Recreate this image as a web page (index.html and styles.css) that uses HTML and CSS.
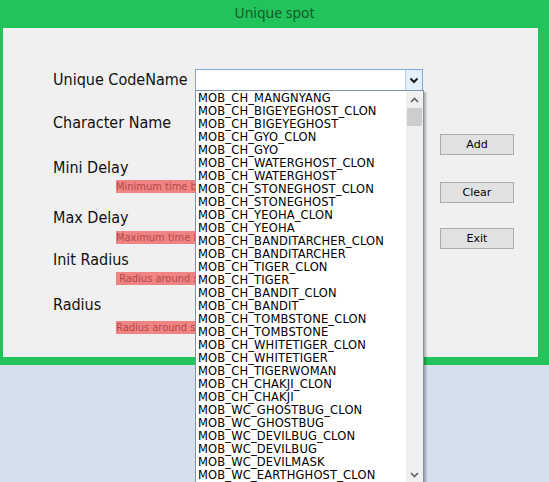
FILE: index.html
```html
<!DOCTYPE html>
<html>
<head>
<meta charset="utf-8">
<link rel="stylesheet" href="styles.css">
</head>
<body>
<div class="window">
  <div class="titlebar">Unique spot</div>
  <div class="client">
    <div class="form">
      <div class="row row-code">
        <span class="label label-code">Unique CodeName</span>
        <div class="combo">
          <div class="combo-field"></div>
          <div class="combo-btn">
            <svg width="10" height="7" viewBox="0 0 10 7"><polyline points="1.5,1.5 5,5 8.5,1.5" fill="none" stroke="#1a1a1a" stroke-width="2"/></svg>
          </div>
          <div class="droplist">
            <ul class="items">
              <li>MOB_CH_MANGNYANG</li>
              <li>MOB_CH_BIGEYEGHOST_CLON</li>
              <li>MOB_CH_BIGEYEGHOST</li>
              <li>MOB_CH_GYO_CLON</li>
              <li>MOB_CH_GYO</li>
              <li>MOB_CH_WATERGHOST_CLON</li>
              <li>MOB_CH_WATERGHOST</li>
              <li>MOB_CH_STONEGHOST_CLON</li>
              <li>MOB_CH_STONEGHOST</li>
              <li>MOB_CH_YEOHA_CLON</li>
              <li>MOB_CH_YEOHA</li>
              <li>MOB_CH_BANDITARCHER_CLON</li>
              <li>MOB_CH_BANDITARCHER</li>
              <li>MOB_CH_TIGER_CLON</li>
              <li>MOB_CH_TIGER</li>
              <li>MOB_CH_BANDIT_CLON</li>
              <li>MOB_CH_BANDIT</li>
              <li>MOB_CH_TOMBSTONE_CLON</li>
              <li>MOB_CH_TOMBSTONE</li>
              <li>MOB_CH_WHITETIGER_CLON</li>
              <li>MOB_CH_WHITETIGER</li>
              <li>MOB_CH_TIGERWOMAN</li>
              <li>MOB_CH_CHAKJI_CLON</li>
              <li>MOB_CH_CHAKJI</li>
              <li>MOB_WC_GHOSTBUG_CLON</li>
              <li>MOB_WC_GHOSTBUG</li>
              <li>MOB_WC_DEVILBUG_CLON</li>
              <li>MOB_WC_DEVILBUG</li>
              <li>MOB_WC_DEVILMASK</li>
              <li>MOB_WC_EARTHGHOST_CLON</li>
            </ul>
            <div class="scrollbar">
              <div class="sb-btn">
                <svg width="9" height="6" viewBox="0 0 9 6"><polyline points="1,5 4.5,1.5 8,5" fill="none" stroke="#606060" stroke-width="1.6"/></svg>
              </div>
              <div class="sb-thumb"></div>
              <div class="sb-track"></div>
              <div class="sb-btn">
                <svg width="9" height="6" viewBox="0 0 9 6"><polyline points="1,1 4.5,4.5 8,1" fill="none" stroke="#606060" stroke-width="1.6"/></svg>
              </div>
            </div>
          </div>
        </div>
      </div>
      <div class="label label-char">Character Name</div>
      <div class="label label-mini">Mini Delay</div>
      <div class="hint hint-mini">Minimum time be</div>
      <div class="label label-max">Max Delay</div>
      <div class="hint hint-max">Maximum time be</div>
      <div class="label label-init">Init Radius</div>
      <div class="hint hint-init">&nbsp;Radius around s</div>
      <div class="label label-rad">Radius</div>
      <div class="hint hint-rad">Radius around s</div>
    </div>
    <div class="buttons">
      <button class="btn btn-add">Add</button>
      <button class="btn btn-clear">Clear</button>
      <button class="btn btn-exit">Exit</button>
    </div>
  </div>
</div>
</body>
</html>
```
FILE: styles.css
```css
html, body {
  margin: 0;
  padding: 0;
}
body {
  background: #d6e0ed;
  width: 549px;
  height: 482px;
  overflow: hidden;
  font-family: "DejaVu Sans", sans-serif;
}
.window {
  background: #22c35a;
  height: 365px;
  display: flex;
  flex-direction: column;
}
.titlebar {
  height: 28px;
  line-height: 26px;
  text-align: center;
  font-family: "Noto Sans", "Open Sans", sans-serif;
  font-size: 14px;
  color: #17592b;
}
.client {
  margin: 0 11px 0 3px;
  height: 329px;
  background: #f0f0f0;
  display: grid;
  grid-template-columns: 437px auto;
}
.form {
  padding: 41px 0 0 50px;
  display: flex;
  flex-direction: column;
  align-items: flex-start;
}
.row-code {
  display: flex;
  align-items: center;
  height: 22px;
}
.label {
  font-family: "DejaVu Sans Condensed", "DejaVu Sans", sans-serif;
  font-stretch: condensed;
  font-size: 16px;
  line-height: 20px;
  height: 20px;
  color: #111;
  white-space: nowrap;
}
.label-code {
  width: 142px;
  line-height: 22px;
  height: 22px;
}
.label-char { margin-top: 22px; }
.label-mini { margin-top: 25px; }
.label-max { margin-top: 15px; }
.label-init { margin-top: 6px; }
.label-rad { margin-top: 10px; }
.hint {
  margin-left: 63px;
  width: 79px;
  height: 13px;
  line-height: 13px;
  font-family: "DejaVu Sans Condensed", "DejaVu Sans", sans-serif;
  font-stretch: condensed;
  font-size: 11px;
  background: #f28383;
  color: #b04a4a;
  white-space: nowrap;
  overflow: hidden;
}
.hint-mini { margin-top: 2px; }
.hint-max { margin-top: 3px; }
.hint-init { margin-top: 2px; }
.hint-rad { margin-top: 6px; }

.combo {
  position: relative;
  width: 228px;
  height: 22px;
  box-sizing: border-box;
  border: 1px solid #7ea9d8;
  background: #fff;
  display: flex;
}
.combo-field {
  flex: 1;
}
.combo-btn {
  width: 16px;
  background: #e3effa;
  border-left: 1px solid #b9d3ee;
  display: flex;
  align-items: center;
  justify-content: center;
}
.droplist {
  position: absolute;
  z-index: 10;
  left: -1px;
  top: 20px;
  width: 229px;
  height: 394px;
  box-sizing: border-box;
  border: 1px solid #7d93ab;
  background: #fff;
  box-shadow: 2px 2px 2px rgba(0, 0, 0, 0.28);
  display: flex;
  overflow: hidden;
}
.items {
  list-style: none;
  margin: 0;
  padding: 1px 0 0 2px;
  flex: 1;
  font-size: 11.5px;
  letter-spacing: 0.15px;
  line-height: 13px;
  color: #000;
  white-space: nowrap;
  overflow: hidden;
}
.items li {
  height: 13px;
}
.scrollbar {
  width: 17px;
  background: #f0f0f0;
  display: flex;
  flex-direction: column;
}
.sb-btn {
  height: 17px;
  display: flex;
  align-items: center;
  justify-content: center;
}
.sb-thumb {
  height: 18px;
  margin: 0 1px;
  background: #cdcdcd;
}
.sb-track {
  flex: 1;
}
.buttons {
  padding-top: 106px;
  display: flex;
  flex-direction: column;
  align-items: flex-start;
}
.btn {
  width: 74px;
  height: 21px;
  margin: 0;
  padding: 0;
  box-sizing: border-box;
  border: 1px solid #adadad;
  background: #e1e1e1;
  font-family: "DejaVu Sans", sans-serif;
  font-size: 11px;
  color: #000;
}
.btn-clear { margin-top: 27px; }
.btn-exit { margin-top: 25px; }
```
